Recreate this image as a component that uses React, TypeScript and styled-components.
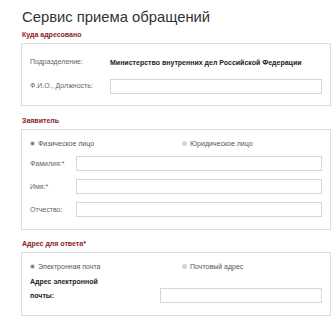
import styled, { createGlobalStyle } from "styled-components";

const Global = createGlobalStyle`
  html, body { margin: 0; padding: 0; background: #fff; }
  body { font-family: "Liberation Sans", Arial, sans-serif; color: #555; }
`;

const Page = styled.div`
  width: 336px;
  height: 320px;
  padding: 7px 5px 0 21px;
  box-sizing: border-box;
  overflow: hidden;
`;

const Title = styled.h1`
  margin: 0 0 0 1px;
  font-size: 14.8px;
  font-weight: 400;
  color: #333;
  line-height: 20px;
`;

const SectionLabel = styled.div<{ $gap?: number }>`
  margin: ${(p) => p.$gap ?? 0}px 0 3px 1px;
  font-size: 7px;
  font-weight: 700;
  color: #8b1c22;
  line-height: 10px;
`;

const Box = styled.div<{ $pb?: number }>`
  border: 1px solid #dcdcdc;
  padding: 6px 8px ${(p) => p.$pb ?? 7}px 8px;
  display: flex;
  flex-direction: column;
`;

const Row = styled.div<{ $label: number; $h?: number; $top?: boolean }>`
  display: grid;
  grid-template-columns: ${(p) => p.$label}px 1fr;
  align-items: ${(p) => (p.$top ? "start" : "center")};
  min-height: ${(p) => p.$h ?? 23}px;
`;

const Label = styled.span<{ $bold?: boolean }>`
  font-size: 7px;
  color: ${(p) => (p.$bold ? "#222" : "#666")};
  font-weight: ${(p) => (p.$bold ? 700 : 400)};
  line-height: 14px;
  white-space: nowrap;
`;

const Value = styled.span`
  font-size: 7px;
  font-weight: 700;
  color: #222;
  white-space: nowrap;
`;

const Input = styled.div<{ $mt?: number }>`
  height: 15px;
  margin-top: ${(p) => p.$mt ?? 0}px;
  border: 1px solid #d6d6d6;
  box-sizing: border-box;
  background: #fff;
`;

const RadioRow = styled.div<{ $split: number }>`
  display: grid;
  grid-template-columns: ${(p) => p.$split}px 1fr;
  align-items: center;
  height: 14px;
  margin-bottom: 2px;
`;

const Radio = styled.label`
  display: flex;
  align-items: center;
  gap: 3px;
  font-size: 7px;
  color: #555;
`;

const Dot = styled.span<{ $on?: boolean }>`
  width: 5px;
  height: 5px;
  border-radius: 50%;
  box-sizing: border-box;
  background: ${(p) =>
    p.$on ? "radial-gradient(circle, #777 0 1.3px, #d8d8d8 1.6px)" : "#d4d4d4"};
`;

export default function App() {
  return (
    <Page>
      <Global />
      <Title>Сервис приема обращений</Title>
      <SectionLabel $gap={3}>Куда адресовано</SectionLabel>
      <Box>
        <Row $label={80} $h={24}>
          <Label>Подразделение:</Label>
          <Value>Министерство внутренних дел Российской Федерации</Value>
        </Row>
        <Row $label={80} $h={24}>
          <Label>Ф.И.О., Должность:</Label>
          <Input />
        </Row>
      </Box>

      <SectionLabel $gap={10}>Заявитель</SectionLabel>
      <Box $pb={8}>
        <RadioRow $split={152}>
          <Radio>
            <Dot $on />
            Физическое лицо
          </Radio>
          <Radio>
            <Dot />
            Юридическое лицо
          </Radio>
        </RadioRow>
        <Row $label={46}>
          <Label>Фамилия:*</Label>
          <Input />
        </Row>
        <Row $label={46}>
          <Label>Имя:*</Label>
          <Input />
        </Row>
        <Row $label={46}>
          <Label>Отчество:</Label>
          <Input />
        </Row>
      </Box>

      <SectionLabel $gap={9}>Адрес для ответа*</SectionLabel>
      <Box $pb={12}>
        <RadioRow $split={152}>
          <Radio>
            <Dot $on />
            Электронная почта
          </Radio>
          <Radio>
            <Dot />
            Почтовый адрес
          </Radio>
        </RadioRow>
        <Row $label={130} $top>
          <Label $bold>
            Адрес электронной
            <br />
            почты:
          </Label>
          <Input $mt={13} />
        </Row>
      </Box>
    </Page>
  );
}
